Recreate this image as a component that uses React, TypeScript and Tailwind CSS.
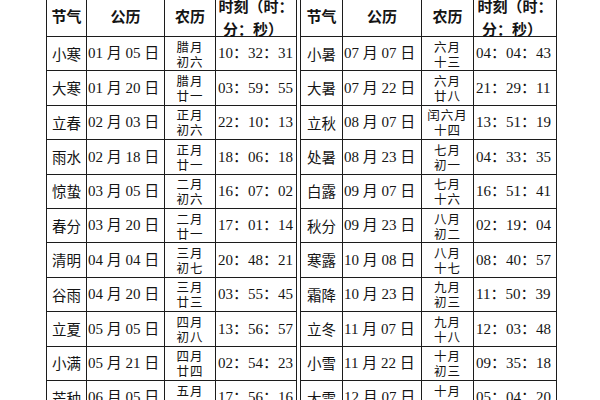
const left = [
  ["小寒", "01", "05", "腊月", "初六", "10：32：31"],
  ["大寒", "01", "20", "腊月", "廿一", "03：59：55"],
  ["立春", "02", "03", "正月", "初六", "22：10：13"],
  ["雨水", "02", "18", "正月", "廿一", "18：06：18"],
  ["惊蛰", "03", "05", "二月", "初六", "16：07：02"],
  ["春分", "03", "20", "二月", "廿一", "17：01：14"],
  ["清明", "04", "04", "三月", "初七", "20：48：21"],
  ["谷雨", "04", "20", "三月", "廿三", "03：55：45"],
  ["立夏", "05", "05", "四月", "初八", "13：56：57"],
  ["小满", "05", "21", "四月", "廿四", "02：54：23"],
  ["芒种", "06", "05", "五月", "初十", "17：56：16"],
];

const right = [
  ["小暑", "07", "07", "六月", "十三", "04：04：43"],
  ["大暑", "07", "22", "六月", "廿八", "21：29：11"],
  ["立秋", "08", "07", "闰六月", "十四", "13：51：19"],
  ["处暑", "08", "23", "七月", "初一", "04：33：35"],
  ["白露", "09", "07", "七月", "十六", "16：51：41"],
  ["秋分", "09", "23", "八月", "初二", "02：19：04"],
  ["寒露", "10", "08", "八月", "十七", "08：40：57"],
  ["霜降", "10", "23", "九月", "初三", "11：50：39"],
  ["立冬", "11", "07", "九月", "十八", "12：03：48"],
  ["小雪", "11", "22", "十月", "初三", "09：35：18"],
  ["大雪", "12", "07", "十月", "十八", "05：04：20"],
];

const cjk = "font-['Noto_Sans_CJK_SC',sans-serif]";
const serif = "font-['Liberation_Serif','Noto_Sans_CJK_SC',serif]";
const cell = "border-r-[1.5px] border-b-[1.5px] border-[#1c1c1c] flex items-center";

const Table = ({ rows, cols }: { rows: string[][]; cols: string }) => (
  <div className={`grid ${cols} border-l-[1.5px] border-t-[1.5px] border-[#1c1c1c] self-start`}>
    {/* header */}
    <div className={`${cell} h-[40px] justify-center font-bold text-[15px] ${cjk}`}>节气</div>
    <div className={`${cell} h-[40px] justify-center font-bold text-[15px] ${cjk}`}>公历</div>
    <div className={`${cell} h-[40px] justify-center font-bold text-[15px] ${cjk}`}>农历</div>
    <div className={`${cell} h-[40px] flex-col justify-center font-bold text-[15px] leading-[23px] ${cjk}`}>
      <span>时刻（时：</span>
      <span className="pr-[6px]">分：秒）</span>
    </div>
    {rows.map((r) => (
      <div key={r[0]} className="contents">
        <div className={`${cell} h-[34.4px] justify-center text-[14.5px] ${cjk}`}>{r[0]}</div>
        <div className={`${cell} h-[34.4px] pl-[1px] text-[15px] ${serif}`}>
          {r[1]} 月 {r[2]} 日
        </div>
        <div
          className={`${cell} h-[34.4px] flex-col justify-center text-[12.5px] leading-[15px] tracking-[1px] whitespace-nowrap ${cjk}`}
        >
          <span>{r[3]}</span>
          <span>{r[4]}</span>
        </div>
        <div className={`${cell} h-[34.4px] pl-[2px] text-[15px] whitespace-nowrap ${serif}`}>{r[5]}</div>
      </div>
    ))}
  </div>
);

export default function App() {
  return (
    <div className="w-[600px] h-[400px] overflow-hidden bg-white text-[#141414]">
      <div className="flex gap-[3px] pl-[46px] mt-[-4px]">
        <Table rows={left} cols="grid-cols-[40px_78px_51px_81px]" />
        <Table rows={right} cols="grid-cols-[42px_79px_52px_83px]" />
      </div>
    </div>
  );
}
